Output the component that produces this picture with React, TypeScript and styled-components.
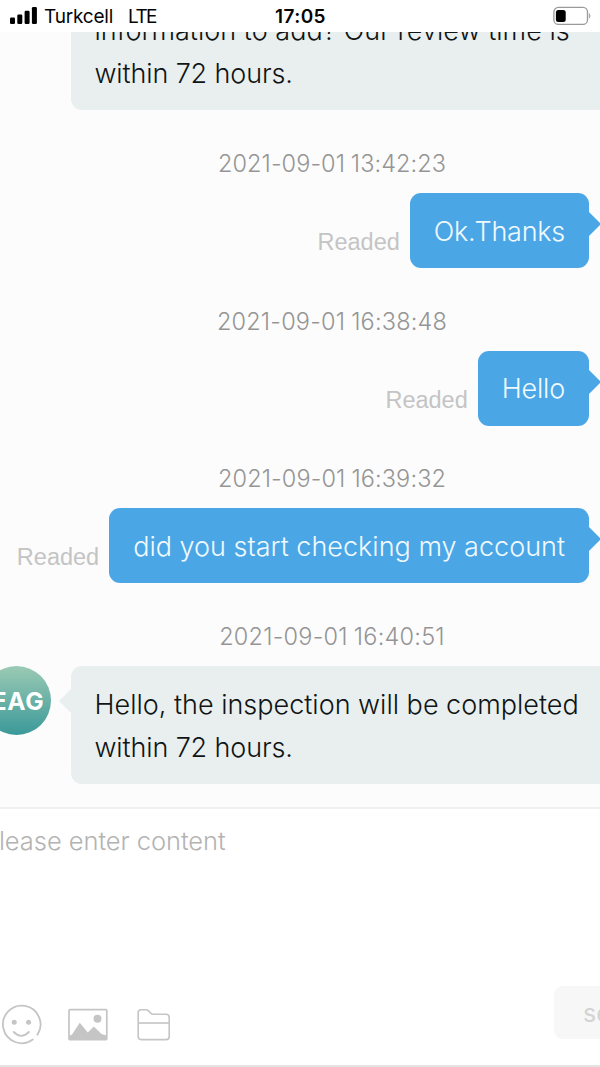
import React from 'react'
import styled, { createGlobalStyle, css } from 'styled-components'


const GlobalStyle = createGlobalStyle`

  * {
    box-sizing: border-box;
  }

  body {
    margin: 0;
    overflow: hidden;

    background: #fff;
    font-family: Inter, "Liberation Sans", sans-serif;
  }

`

const Screen = styled.div`
  width: 600px;
  height: 1067px;

  display: flex;
  flex-direction: column;

  overflow: hidden;

  background: #fff;
`

const StatusBar = styled.header`
  height: 32px;
  flex-shrink: 0;

  padding: 0 9px 0 10px;

  display: grid;
  grid-template-columns: 1fr auto 1fr;
  align-items: center;

  color: #050505;
`

const Network = styled.div`
  display: flex;
  align-items: center;
`

const Carrier = styled.span<{ $gap: number; $spacing: number }>`
  margin-left: ${props => props.$gap}px;
  padding-top: 2px;

  font-size: 19px;
  letter-spacing: ${props => props.$spacing}px;
  line-height: 30px;
`

const Clock = styled.span`
  padding-top: 2px;

  font-size: 19px;
  font-weight: 600;
  letter-spacing: 0.4px;
  line-height: 30px;
`

const Battery = styled.svg`
  justify-self: end;
`

const Chat = styled.main`
  flex: 1;
  min-height: 0;

  padding-bottom: 23px;

  display: flex;
  flex-direction: column;
  justify-content: flex-end;

  overflow: hidden;

  background: #fcfcfc;
`

const Time = styled.time<{ $spacing: number }>`
  flex-shrink: 0;

  margin-top: 38.6px;
  margin-bottom: 14px;
  padding-left: 64px;

  color: #959595;
  font-size: 23.5px;
  font-weight: 300;
  letter-spacing: ${props => props.$spacing}px;
  line-height: 30px;
  text-align: center;
  word-spacing: -0.8px;
`

const Row = styled.div<{ $mine?: boolean }>`
  flex-shrink: 0;

  display: flex;
  align-items: flex-start;

  &:first-child {
    margin-bottom: 0.6px;
  }

  ${props => props.$mine && css`
    padding-right: 11px;

    align-items: flex-end;
    justify-content: flex-end;
  `}
`

const Readed = styled.span`
  margin-right: 10px;
  margin-bottom: 12px;

  color: #c4c4c4;
  font-family: "Liberation Sans", Arial, sans-serif;
  font-size: 23.5px;
  line-height: 28px;
`

const Bubble = styled.div<{ $mine?: boolean; $tail?: boolean; $spacing?: number }>`
  position: relative;
  flex-shrink: 0;

  padding: 16.6px 24px 15.4px;

  border-radius: 11px;

  font-size: 27px;
  font-weight: 300;
  letter-spacing: ${props => props.$spacing || 0}px;
  line-height: 43px;
  white-space: pre;

  ${props => props.$mine ? css`
    background: #4ba6e6;
    color: #effaff;
  ` : css`
    width: 560px;

    background: #e9efef;
    color: #101414;
  `}

  ${props => props.$tail && css`
    &::after {
      content: '';
      position: absolute;
      top: ${props.$mine ? 19 : 23}px;

      border: 12px solid transparent;

      ${props.$mine
        ? 'left: 100%; border-left-color: #4ba6e6;'
        : 'right: 100%; border-right-color: #e9efef;'}
    }
  `}
`

const Line = styled.div<{ $spacing: number }>`
  margin-left: -0.5px;

  letter-spacing: ${props => props.$spacing}px;
`

const Avatar = styled.div<{ $hidden?: boolean }>`
  width: 69px;
  height: 69px;
  flex-shrink: 0;

  margin-left: -18px;
  margin-right: 20px;
  padding-left: 3px;

  display: flex;
  align-items: center;
  justify-content: center;

  border-radius: 50%;

  background: linear-gradient(#9bcab4, #3b9999);
  color: #fff;
  font-size: 24.5px;
  font-weight: 700;
  letter-spacing: 0.6px;
  visibility: ${props => props.$hidden ? 'hidden' : 'visible'};
`

const Composer = styled.footer`
  height: 260px;
  flex-shrink: 0;

  display: flex;
  flex-direction: column;
  justify-content: space-between;

  border-top: 2px solid #f0f0f0;
  border-bottom: 2px solid #e4e4e4;
`

const Placeholder = styled.div`
  margin-top: 17px;
  margin-left: -17px;

  color: #b3b3b3;
  font-size: 25.5px;
  font-weight: 300;
  letter-spacing: -0.05px;
  line-height: 30px;
`

const Toolbar = styled.div`
  padding-bottom: 26px;

  display: flex;
  align-items: flex-end;
  justify-content: space-between;
`

const Tools = styled.div`
  display: flex;
  align-items: center;
  gap: 26px;

  margin-bottom: -6px;
`

const FolderSlot = styled.span`
  display: flex;

  margin-left: 3px;
`

const SendButton = styled.button`
  width: 120px;
  height: 53px;
  flex-shrink: 0;

  margin-right: -74px;
  padding: 0 0 0 29px;

  border: none;
  border-radius: 9px;

  background: #f7f7f7;
  color: #d3d3d3;
  font-family: inherit;
  font-size: 25px;
  text-align: left;
`

const SignalIcon = () => (
  <svg width='27' height='18' viewBox='0 0 27 18' fill='#000'>
    <rect x='0' y='10.5' width='5' height='6.5' rx='1.3' />
    <rect x='7.3' y='7.5' width='5' height='9.5' rx='1.3' />
    <rect x='14.6' y='3.7' width='5' height='13.3' rx='1.3' />
    <rect x='21.9' y='0' width='5' height='17' rx='1.3' />
  </svg>
)

const BatteryIcon = () => (
  <Battery width='38' height='20' viewBox='0 0 38 20'>
    <rect x='0.9' y='1.4' width='33.6' height='17' rx='4.5' fill='none' stroke='#9a9a9a' strokeWidth='1.3' />
    <rect x='2.9' y='4' width='9.8' height='12' rx='2.5' fill='#000' />
    <path d='M36.3 7.6 Q38 9.9 36.3 12.2 Z' fill='#9a9a9a' stroke='#9a9a9a' strokeWidth='0.5' />
  </Battery>
)

const SmileIcon = () => (
  <svg width='42' height='41' viewBox='-0.6 -0.4 42 41' fill='none' stroke='#c5c5c5' strokeWidth='1.8' strokeLinecap='round'>
    <path d='M32.2 35.2 A18.8 18.8 0 1 1 36.8 30.4' />
    <path d='M13.1 27.6 Q20.6 35.2 28.3 27.6' />
    <circle cx='13.6' cy='17.8' r='2.5' fill='#c5c5c5' stroke='none' />
    <circle cx='28' cy='17.8' r='2.5' fill='#c5c5c5' stroke='none' />
  </svg>
)

const PictureIcon = () => (
  <svg width='40' height='33' viewBox='0 0 40 33' fill='#c5c5c5'>
    <rect x='1' y='1.6' width='37.8' height='30' rx='1' fill='none' stroke='#c5c5c5' strokeWidth='1.7' />
    <circle cx='29.5' cy='10.8' r='4' />
    <path d='M1 31.5 V28 L4 26.5 L11.8 14.8 L19.8 24.5 L25.8 18.5 L33.5 26 L38.8 27.5 V31.5 Z' />
  </svg>
)

const FolderIcon = () => (
  <svg width='34' height='34' viewBox='0 0 34 34' fill='none' stroke='#c5c5c5' strokeWidth='1.6' strokeLinejoin='round'>
    <path d='M1.2 28.6 V4.6 Q1.2 1.7 4.2 1.7 H9 Q10.4 1.7 11.3 2.7 L14 5.3 Q14.9 6.2 16.2 6.2 H29 Q32.2 6.2 32.2 9.4 V28.4 Q32.2 31.6 29 31.6 H4.2 Q1.2 31.6 1.2 28.6 Z' />
    <path d='M1.2 15 H32.2' />
  </svg>
)

interface SentProps {
  time: string,
  text: string,
  timeSpacing: number,
  spacing?: number
}

const Sent: React.FC<SentProps> = ({ time, text, timeSpacing, spacing }) => {

  return (
    <>
      <Time $spacing={timeSpacing}>{time}</Time>
      <Row $mine>
        <Readed>Readed</Readed>
        <Bubble $mine $tail $spacing={spacing}>{text}</Bubble>
      </Row>
    </>
  )
}

export default function App() {

  return (
    <Screen>
      <GlobalStyle />

      <StatusBar>
        <Network>
          <SignalIcon />
          <Carrier $gap={7} $spacing={-0.2}>Turkcell</Carrier>
          <Carrier $gap={15} $spacing={-1.6}>LTE</Carrier>
        </Network>
        <Clock>17:05</Clock>
        <BatteryIcon />
      </StatusBar>

      <Chat>
        <Row>
          <Avatar $hidden />
          <Bubble>
            <Line $spacing={0.02}>information to add? Our review time is</Line>
            <Line $spacing={-0.13}>within 72 hours.</Line>
          </Bubble>
        </Row>

        <Sent time='2021-09-01 13:42:23' text='Ok.Thanks' timeSpacing={0.06} spacing={-0.25} />
        <Sent time='2021-09-01 16:38:48' text='Hello' timeSpacing={0.19} spacing={-0.2} />
        <Sent time='2021-09-01 16:39:32' text='did you start checking my account' timeSpacing={0.12} />

        <Time $spacing={0.23}>2021-09-01 16:40:51</Time>
        <Row>
          <Avatar>EAG</Avatar>
          <Bubble $tail>
            <Line $spacing={0}>Hello, the inspection will be completed</Line>
            <Line $spacing={-0.13}>within 72 hours.</Line>
          </Bubble>
        </Row>
      </Chat>

      <Composer>
        <Placeholder>Please enter content</Placeholder>
        <Toolbar>
          <Tools>
            <SmileIcon />
            <PictureIcon />
            <FolderSlot>
              <FolderIcon />
            </FolderSlot>
          </Tools>
          <SendButton>send</SendButton>
        </Toolbar>
      </Composer>
    </Screen>
  )
}
